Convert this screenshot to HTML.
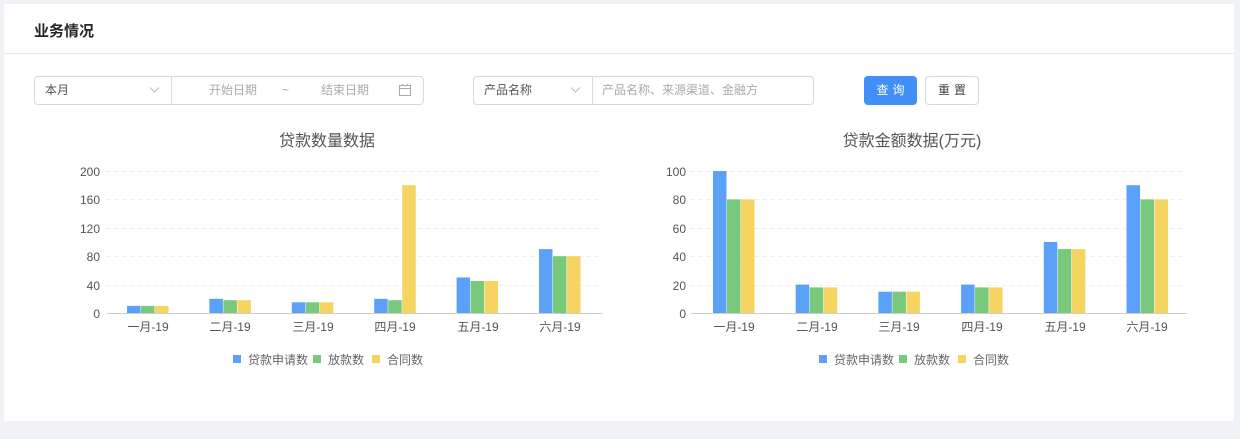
<!DOCTYPE html>
<html><head><meta charset="utf-8"><style>
*{margin:0;padding:0;box-sizing:border-box}
body{width:1240px;height:439px;background:#f0f2f5;font-family:"Liberation Sans","Noto Sans CJK SC",sans-serif;position:relative;overflow:hidden}
.card{position:absolute;left:4px;top:4px;width:1230px;height:417px;background:#fff}
.hd{position:absolute;left:0;top:0;width:100%;height:50px;border-bottom:1px solid #e8e8e8;font-size:15px;font-weight:bold;color:#262626;padding:16px 0 0 30px}
.box{position:absolute;top:72px;height:29px;border:1px solid #d9d9d9;border-radius:4px;font-size:12px;color:#555;line-height:27px}
.ph{color:#aaa}
.btn{position:absolute;top:72px;height:29px;border-radius:4px;font-size:12px;line-height:29px;text-align:center;letter-spacing:4px;text-indent:4px}
</style></head><body>
<div class="card">
<div class="hd">业务情况</div>
<div class="box" style="left:30px;width:390px">
 <span style="position:absolute;left:10px">本月</span>
 <svg style="position:absolute;left:114px;top:9px" width="11" height="8"><path d="M1 1.5 L5.5 6 L10 1.5" fill="none" stroke="#bbb" stroke-width="1"/></svg>
 <div style="position:absolute;left:136px;top:0;height:27px;border-left:1px solid #d9d9d9"></div>
 <span class="ph" style="position:absolute;left:174px">开始日期</span>
 <span class="ph" style="position:absolute;left:247px">~</span>
 <span class="ph" style="position:absolute;left:286px">结束日期</span>
 <svg style="position:absolute;left:364px;top:7px" width="12" height="12"><rect x="0.5" y="1.5" width="11" height="10" fill="none" stroke="#aaa"/><line x1="0.5" x2="11.5" y1="4.5" y2="4.5" stroke="#aaa"/><line x1="3.5" x2="3.5" y1="0" y2="2" stroke="#aaa"/><line x1="8.5" x2="8.5" y1="0" y2="2" stroke="#aaa"/></svg>
</div>
<div class="box" style="left:469px;width:341px">
 <span style="position:absolute;left:10px">产品名称</span>
 <svg style="position:absolute;left:96px;top:9px" width="11" height="8"><path d="M1 1.5 L5.5 6 L10 1.5" fill="none" stroke="#bbb" stroke-width="1"/></svg>
 <div style="position:absolute;left:118px;top:0;height:27px;border-left:1px solid #d9d9d9"></div>
 <span class="ph" style="position:absolute;left:128px">产品名称、来源渠道、金融方</span>
</div>
<div class="btn" style="left:860px;width:53px;background:#4090f7;color:#fff">查询</div>
<div class="btn" style="left:921px;width:54px;border:1px solid #d9d9d9;color:#444;line-height:27px">重置</div>
</div>
<svg width="1240" height="439" style="position:absolute;left:0;top:0" font-family="Liberation Sans,Noto Sans CJK SC,sans-serif">
<g font-size="16" fill="#555" text-anchor="middle"><text x="327" y="146">贷款数量数据</text><text x="912" y="146">贷款金额数据(万元)</text></g>
<g stroke="#eee" stroke-dasharray="4,4">
<line x1="107" x2="602" y1="171.5" y2="171.5"/><line x1="107" x2="602" y1="199.5" y2="199.5"/><line x1="107" x2="602" y1="228.5" y2="228.5"/><line x1="107" x2="602" y1="256.5" y2="256.5"/><line x1="107" x2="602" y1="285.5" y2="285.5"/>
<line x1="691" x2="1187" y1="171.5" y2="171.5"/><line x1="691" x2="1187" y1="199.5" y2="199.5"/><line x1="691" x2="1187" y1="228.5" y2="228.5"/><line x1="691" x2="1187" y1="256.5" y2="256.5"/><line x1="691" x2="1187" y1="285.5" y2="285.5"/>
</g>
<g font-size="12" fill="#555" text-anchor="end">
<text x="100" y="176">200</text><text x="100" y="204">160</text><text x="100" y="233">120</text><text x="100" y="261">80</text><text x="100" y="290">40</text><text x="100" y="318">0</text>
<text x="686" y="176">100</text><text x="686" y="204">80</text><text x="686" y="233">60</text><text x="686" y="261">40</text><text x="686" y="290">20</text><text x="686" y="318">0</text>
</g>
<g font-size="12" fill="#555" text-anchor="middle">
<text x="148" y="331">一月-19</text><text x="230" y="331">二月-19</text><text x="313" y="331">三月-19</text><text x="395" y="331">四月-19</text><text x="478" y="331">五月-19</text><text x="560" y="331">六月-19</text>
<text x="734" y="331">一月-19</text><text x="817" y="331">二月-19</text><text x="899" y="331">三月-19</text><text x="982" y="331">四月-19</text><text x="1065" y="331">五月-19</text><text x="1147" y="331">六月-19</text>
</g>
<g>
<g transform="translate(127,0)"><rect x="0" y="305.9" width="13.5" height="7.1" fill="#5ba1f7"/><rect x="14" y="305.9" width="13.5" height="7.1" fill="#79c97c"/><rect x="28" y="305.9" width="13.5" height="7.1" fill="#f5d462"/></g>
<g transform="translate(209.4,0)"><rect x="0" y="298.8" width="13.5" height="14.2" fill="#5ba1f7"/><rect x="14" y="300.2" width="13.5" height="12.8" fill="#79c97c"/><rect x="28" y="300.2" width="13.5" height="12.8" fill="#f5d462"/></g>
<g transform="translate(291.8,0)"><rect x="0" y="302.3" width="13.5" height="10.7" fill="#5ba1f7"/><rect x="14" y="302.3" width="13.5" height="10.7" fill="#79c97c"/><rect x="28" y="302.3" width="13.5" height="10.7" fill="#f5d462"/></g>
<g transform="translate(374.2,0)"><rect x="0" y="298.8" width="13.5" height="14.2" fill="#5ba1f7"/><rect x="14" y="300.2" width="13.5" height="12.8" fill="#79c97c"/><rect x="28" y="185.2" width="13.5" height="127.8" fill="#f5d462"/></g>
<g transform="translate(456.6,0)"><rect x="0" y="277.5" width="13.5" height="35.5" fill="#5ba1f7"/><rect x="14" y="281" width="13.5" height="32" fill="#79c97c"/><rect x="28" y="281" width="13.5" height="32" fill="#f5d462"/></g>
<g transform="translate(539,0)"><rect x="0" y="249.1" width="13.5" height="63.9" fill="#5ba1f7"/><rect x="14" y="256.2" width="13.5" height="56.8" fill="#79c97c"/><rect x="28" y="256.2" width="13.5" height="56.8" fill="#f5d462"/></g>
<g transform="translate(713,0)"><rect x="0" y="171" width="13.5" height="142" fill="#5ba1f7"/><rect x="14" y="199.4" width="13.5" height="113.6" fill="#79c97c"/><rect x="28" y="199.4" width="13.5" height="113.6" fill="#f5d462"/></g>
<g transform="translate(795.7,0)"><rect x="0" y="284.6" width="13.5" height="28.4" fill="#5ba1f7"/><rect x="14" y="287.4" width="13.5" height="25.6" fill="#79c97c"/><rect x="28" y="287.4" width="13.5" height="25.6" fill="#f5d462"/></g>
<g transform="translate(878.4,0)"><rect x="0" y="291.7" width="13.5" height="21.3" fill="#5ba1f7"/><rect x="14" y="291.7" width="13.5" height="21.3" fill="#79c97c"/><rect x="28" y="291.7" width="13.5" height="21.3" fill="#f5d462"/></g>
<g transform="translate(961.1,0)"><rect x="0" y="284.6" width="13.5" height="28.4" fill="#5ba1f7"/><rect x="14" y="287.4" width="13.5" height="25.6" fill="#79c97c"/><rect x="28" y="287.4" width="13.5" height="25.6" fill="#f5d462"/></g>
<g transform="translate(1043.8,0)"><rect x="0" y="242" width="13.5" height="71" fill="#5ba1f7"/><rect x="14" y="249.1" width="13.5" height="63.9" fill="#79c97c"/><rect x="28" y="249.1" width="13.5" height="63.9" fill="#f5d462"/></g>
<g transform="translate(1126.5,0)"><rect x="0" y="185.2" width="13.5" height="127.8" fill="#5ba1f7"/><rect x="14" y="199.4" width="13.5" height="113.6" fill="#79c97c"/><rect x="28" y="199.4" width="13.5" height="113.6" fill="#f5d462"/></g>
</g>
<g stroke="#ccc"><line x1="107" x2="602" y1="313.5" y2="313.5"/><line x1="691" x2="1187" y1="313.5" y2="313.5"/></g>
<g font-size="12" fill="#666">
<rect x="233" y="355" width="8" height="8" fill="#5ba1f7"/><text x="248" y="364">贷款申请数</text>
<rect x="313" y="355" width="8" height="8" fill="#79c97c"/><text x="328" y="364">放款数</text>
<rect x="372" y="355" width="8" height="8" fill="#f5d462"/><text x="387" y="364">合同数</text>
<rect x="819" y="355" width="8" height="8" fill="#5ba1f7"/><text x="834" y="364">贷款申请数</text>
<rect x="899" y="355" width="8" height="8" fill="#79c97c"/><text x="914" y="364">放款数</text>
<rect x="958" y="355" width="8" height="8" fill="#f5d462"/><text x="973" y="364">合同数</text>
</g>
</svg>
</body></html>
